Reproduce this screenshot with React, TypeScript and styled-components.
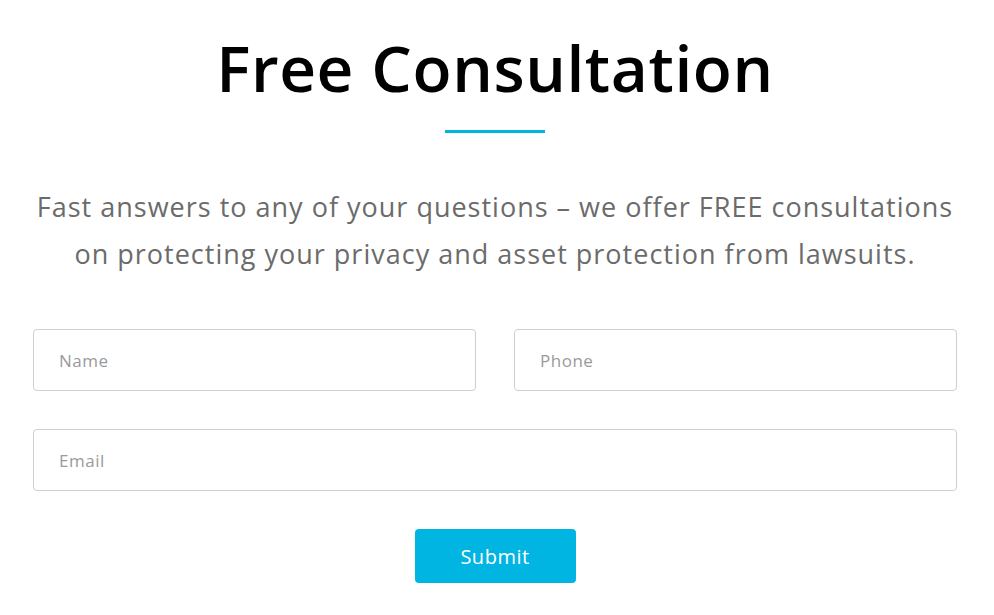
import React from 'react'
import styled, { createGlobalStyle } from 'styled-components';

const GlobalStyle = createGlobalStyle`
  body {
    margin: 0;
    background: #fff;
    font-family: 'Open Sans', 'Liberation Sans', sans-serif;
  }
`

const Page = styled.div`
  width: 924px;
  margin-left: 33px;
  padding-top: 22px;
  display: flex;
  flex-direction: column;
  align-items: center;
`
const Title = styled.h1`
  margin: 0;
  font-size: 64px;
  line-height: 92px;
  font-weight: 600;
  color: #000;
  letter-spacing: 0.6px;
`
const Divider = styled.div`
  width: 100px;
  height: 3px;
  margin-top: 16px;
  background: #00b5e2;
`
const Lead = styled.p`
  margin: 50px 0 0;
  font-size: 27px;
  line-height: 47px;
  letter-spacing: 1px;
  color: #6b6b6b;
  text-align: center;
`
const Form = styled.form`
  width: 100%;
  margin-top: 52px;
  display: grid;
  grid-template-columns: 1fr 1fr;
  column-gap: 38px;
  row-gap: 38px;
`
const Field = styled.input<{ $wide?: boolean }>`
  grid-column: ${p => (p.$wide ? '1 / -1' : 'auto')};
  box-sizing: border-box;
  height: 62px;
  padding: 0 25px;
  border: 1px solid #cfcfcf;
  border-radius: 4px;
  font-family: inherit;
  font-size: 17px;
  letter-spacing: 0.5px;
  color: #333;
  outline: none;
  &::placeholder {
    color: #9a9a9a;
  }
`
const Actions = styled.div`
  grid-column: 1 / -1;
  display: flex;
  justify-content: center;
`
const SubmitButton = styled.button`
  width: 161px;
  height: 54px;
  border: none;
  border-radius: 4px;
  background: #00b5e2;
  color: #fff;
  font-family: inherit;
  font-size: 20px;
  letter-spacing: 0.5px;
  cursor: pointer;
`

export default function App() {
  return (
    <>
      <GlobalStyle />
      <Page>
        <Title>Free Consultation</Title>
        <Divider />
        <Lead>
          Fast answers to any of your questions – we offer FREE consultations<br />
          on protecting your privacy and asset protection from lawsuits.
        </Lead>
        <Form onSubmit={e => e.preventDefault()}>
          <Field type="text" placeholder="Name" />
          <Field type="tel" placeholder="Phone" />
          <Field $wide type="email" placeholder="Email" />
          <Actions>
            <SubmitButton type="submit">Submit</SubmitButton>
          </Actions>
        </Form>
      </Page>
    </>
  )
}
